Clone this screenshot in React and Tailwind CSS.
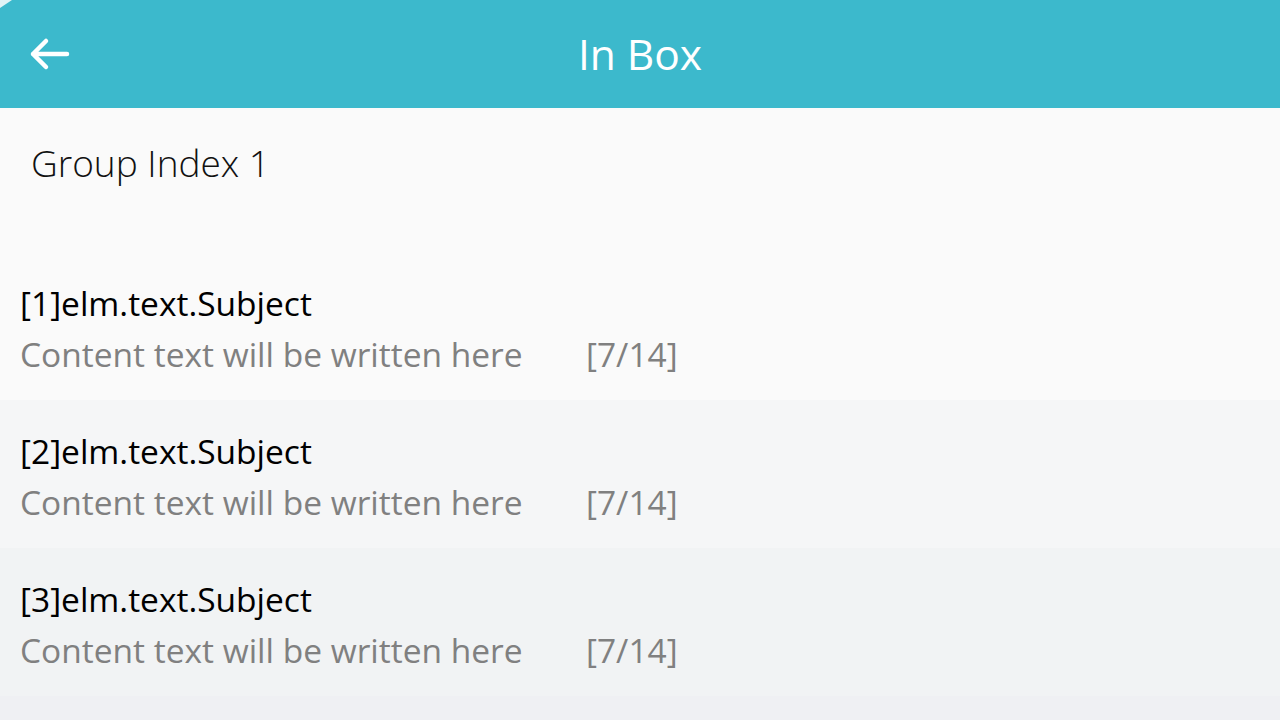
import React from 'react';

const rows = [
  { id: 1, bg: 'bg-[#fafafa]' },
  { id: 2, bg: 'bg-[#f5f6f7]' },
  { id: 3, bg: 'bg-[#f1f3f4]' },
];

export default function App() {
  return (
    <div className="w-[1280px] h-[720px] overflow-hidden bg-[#eff0f3] font-['Open_Sans',sans-serif] relative">
      {/* little corner marker */}
      <div className="absolute top-0 left-0 w-0 h-0 border-t-[8px] border-t-[#dff3f6] border-r-[12px] border-r-transparent z-10"></div>

      <header className="h-[108px] bg-[#3cb9cc] flex items-center relative">
        <button className="ml-[27px] w-[44px] h-[44px] flex items-center justify-center">
          <svg width="44" height="44" viewBox="0 0 44 44" fill="none">
            <path d="M40 22 H6 M19 9 L6 22 L19 35" stroke="white" strokeWidth="4.5" strokeLinecap="round" strokeLinejoin="round" />
          </svg>
        </button>
        <h1 className="absolute left-0 right-0 text-center text-white text-[42.5px] leading-none pointer-events-none">In Box</h1>
      </header>

      <div className="h-[144px] bg-[#fafafa] pl-[31px] pt-[36px]">
        <div className="text-[37px] leading-none font-light text-[#111]">Group Index 1</div>
      </div>

      {rows.map((r) => (
        <div key={r.id} className={`h-[148px] ${r.bg} pl-[20px] pt-[35px]`}>
          <div className="text-[33.5px] leading-none text-black">[{r.id}]elm.text.Subject</div>
          <div className="flex text-[33.5px] leading-none text-[#808080] mt-[17px]">
            <span className="w-[566px]">Content text will be written here</span>
            <span>[7/14]</span>
          </div>
        </div>
      ))}
    </div>
  );
}
